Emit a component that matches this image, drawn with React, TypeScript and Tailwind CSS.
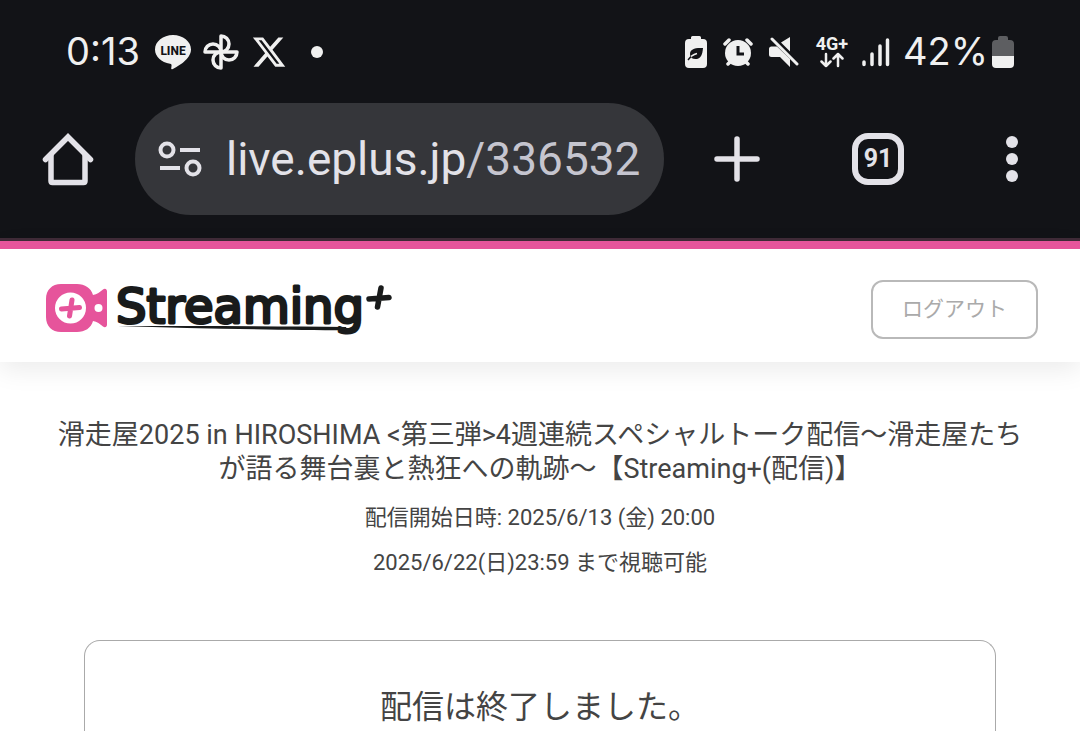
import React from 'react';
import { FaXTwitter } from 'react-icons/fa6';

function LineIcon() {
  return (
    <svg viewBox="0 0 36 36" className="w-9 h-9" fill="none">
      <path d="M18 1C8 1 0 7.500 0 15.500c0 7.200 6.400 13 15 14.300 1.500.3 1.700 1 1.500 2.300l-.3 2.400c0 .7.400 1 1.100.7C23 32.500 36 25 36 15.500 36 7.500 28 1 18 1Z" fill="#f0f0f0" />
      <text x="18" y="21" textAnchor="middle" fontSize="12" fontWeight="800" fontFamily="Roboto, sans-serif" fill="#121317">
        LINE
      </text>
    </svg>
  );
}

function PinwheelIcon() {
  return (
    <svg viewBox="0 0 36 36" className="w-9 h-9" fill="none" stroke="#f0f0f0" strokeWidth="3.500" strokeLinejoin="round">
      <path d="M18 18V2a8 8 0 0 1 0 16Z" />
      <path d="M18 18h16a8 8 0 0 1-16 0Z" />
      <path d="M18 18v16a8 8 0 0 1 0-16Z" />
      <path d="M18 18H2a8 8 0 0 1 16 0Z" />
    </svg>
  );
}

function PowerSavingIcon() {
  return (
    <svg viewBox="0 0 22 32" className="w-[22px] h-8">
      <path d="M6 3V1.500Q6 0 7.500 0h7Q16 0 16 1.500V3h2q4 0 4 4v21q0 4-4 4H4q-4 0-4-4V7q0-4 4-4Z" fill="#f0f0f0" />
      <path d="M18 12c-8-.5-13 1-13 6 0 1.500.5 3 1.500 4 1.500.9 3.500 1.200 5.500.9 4-.7 5.500-4.400 6-10.900Z" fill="#121317" />
      <path d="M3 24.500c2-3.500 5-6 9-7" stroke="#f0f0f0" strokeWidth="1.500" fill="none" />
      <path d="M3 24c1-1 2-2.500 3-3.500" stroke="#121317" strokeWidth="1.500" />
    </svg>
  );
}

function AlarmIcon() {
  return (
    <svg viewBox="0 0 30 30" className="w-[30px] h-[30px]" fill="none" strokeLinecap="round">
      <circle cx="15" cy="16" r="13" fill="#f0f0f0" />
      <path d="M2 7l4-4M28 7l-4-4M5 27l3-3M25 27l-3-3" stroke="#f0f0f0" strokeWidth="3.500" />
      <path d="M15 9v8h6" stroke="#121317" strokeWidth="3" strokeLinecap="butt" />
    </svg>
  );
}

function MuteIcon() {
  return (
    <svg viewBox="0 0 30 32" className="w-[30px] h-8" fill="none">
      <path d="M0 13q0-2.500 2.500-2.500H8L21 23v8L11 21H2.500Q0 21 0 18.500ZM12 6.500 21 1v14.500Z" fill="#f0f0f0" />
      <path d="M3 3l25 25" stroke="#f0f0f0" strokeWidth="3" strokeLinecap="round" />
    </svg>
  );
}

function NetworkIcon() {
  return (
    <div className="w-[34px] flex flex-col items-center">
      <span className="font-[Roboto,sans-serif] text-[18px] leading-4 font-bold">4G+</span>
      <svg viewBox="0 0 24 16" className="w-6 h-4" fill="none" stroke="#f0f0f0" strokeWidth="2.500" strokeLinecap="round" strokeLinejoin="round">
        <path d="M6 2v12M1.500 9.500 6 14l4.500-4.500M18 14V2M13.500 6.500 18 2l4.500 4.500" />
      </svg>
    </div>
  );
}

function SignalIcon() {
  return (
    <svg viewBox="0 0 28 30" className="w-7 h-[30px]" stroke="#f0f0f0" strokeWidth="3.500" strokeLinecap="round">
      <path d="M2 25v2.500M10 17v10.500M18 9v18.500M25.500 3v24.500" />
    </svg>
  );
}

function BatteryIcon() {
  return (
    <svg viewBox="0 0 22 32" className="w-[22px] h-8">
      <path d="M6 4V2q0-2 2-2h6q2 0 2 2v2h2q4 0 4 4v12H0V8q0-4 4-4Z" fill="#5d5e61" />
      <path d="M0 20h22v8q0 4-4 4H4q-4 0-4-4Z" fill="#f0f0f0" />
    </svg>
  );
}

function HomeIcon() {
  return (
    <svg viewBox="0 0 52 54" className="w-[52px] h-[54px]" fill="none" stroke="#e3e2e8" strokeWidth="5.500">
      <path d="M3.500 27.500 26 5l22.500 22.500" strokeLinecap="round" />
      <path d="M9 23v26q0 1.500 1.500 1.500h31q1.500 0 1.500-1.500V23" strokeLinejoin="round" />
    </svg>
  );
}

function TuneIcon() {
  return (
    <svg viewBox="0 0 44 36" className="w-11 h-9" fill="none" stroke="#e3e2e8" strokeWidth="4">
      <circle cx="9" cy="9" r="6.500" />
      <circle cx="35" cy="27" r="6.500" />
      <path d="M22 9h20M2 27h20" />
    </svg>
  );
}

function StreamingLogo() {
  return (
    <svg viewBox="0 -4 350 68" className="w-[350px] h-[68px]" fill="none" strokeLinecap="round" aria-label="Streaming+">
      <path d="M16 4h16c8 0 14 4 16 11 4-.5 7-3 10-5.500 2-1.500 4-.5 4 2v33c0 2.500-2 3.500-4 2-3-2.500-6-5-10-5.500-2 7-8 11-16 11H16C7 52 1 46 1 37V19C1 10 7 4 16 4Z" fill="#e6549b" />
      <circle cx="25.500" cy="28" r="15.500" fill="#fff" />
      <path d="M16.500 29l18-1.500M27 20l-2.500 16" stroke="#e6549b" strokeWidth="5" />
      <circle cx="53.500" cy="28" r="4" fill="#fff" />
      <text x="71" y="43" fontSize="48" fontFamily="DejaVu Sans, sans-serif" fill="#191b1b" stroke="#191b1b" strokeWidth="3" strokeLinejoin="round">
        Streaming
      </text>
      <path d="M73 46c80 0 160 0 228 1l1 3.500C235 50 150 48.500 73 46Z" fill="#191b1b" />
      <path d="M324 19l20-1.500M336 8l-3.500 19" stroke="#191b1b" strokeWidth="5.500" />
    </svg>
  );
}

function StatusBar() {
  return (
    <div className="h-[103px] pl-[66px] pr-[66px] flex items-center justify-between text-[#f0f0f0] font-[Inter,sans-serif] text-[38px]">
      <div className="flex items-center gap-3">
        <span className="w-[77px]">0:13</span>
        <LineIcon />
        <PinwheelIcon />
        <FaXTwitter size={36} />
        <span className="w-3 h-3 ml-3 rounded-full bg-[#f0f0f0]"></span>
      </div>
      <div className="flex items-center gap-4">
        <PowerSavingIcon />
        <AlarmIcon />
        <MuteIcon />
        <div className="flex items-center gap-[13px]">
          <NetworkIcon />
          <SignalIcon />
          <div className="flex items-center gap-1">
            <span>42%</span>
            <BatteryIcon />
          </div>
        </div>
      </div>
    </div>
  );
}

function BrowserBar() {
  return (
    <div className="pl-[42px] pr-[62px] pb-[23px] flex items-center">
      <button type="button" aria-label="Home">
        <HomeIcon />
      </button>
      <button
        type="button"
        className="flex-1 h-28 ml-[41px] mr-[50px] pl-[23px] flex items-center gap-6 rounded-full bg-[#35363a] font-[Roboto,sans-serif] text-[46px] text-[#e3e2e8]"
      >
        <TuneIcon />
        <span>
          live.eplus.jp<span className="text-[#c5c5cf]">/336532</span>
        </span>
      </button>
      <button type="button" aria-label="New tab">
        <svg viewBox="0 0 46 46" className="w-[46px] h-[46px]" stroke="#e3e2e8" strokeWidth="5.500" strokeLinecap="round">
          <path d="M23 3v40M3 23h40" />
        </svg>
      </button>
      <button
        type="button"
        className="w-[52px] h-[52px] ml-[92px] mr-[102px] flex items-center justify-center rounded-2xl border-6 border-[#e3e2e8] font-[Roboto,sans-serif] text-[25px] font-bold text-[#e3e2e8]"
      >
        91
      </button>
      <button type="button" aria-label="Menu" className="flex flex-col gap-[5px]">
        <span className="w-3 h-3 rounded-full bg-[#e3e2e8]"></span>
        <span className="w-3 h-3 rounded-full bg-[#e3e2e8]"></span>
        <span className="w-3 h-3 rounded-full bg-[#e3e2e8]"></span>
      </button>
    </div>
  );
}

function App() {
  return (
    <div lang="ja" className="min-h-screen flex flex-col bg-white font-[Roboto,'Noto_Sans_CJK_JP',sans-serif] text-[#444]">
      <div className="bg-[#121317] border-b-3 border-[#402b38]">
        <StatusBar />
        <BrowserBar />
      </div>

      <header className="h-[121px] shrink-0 pt-2 pl-[45px] pr-[42px] flex items-center justify-between border-t-8 border-[#e6549b] bg-white shadow-[0_8px_24px_rgba(0,0,0,0.08)]">
        <a href="#">
          <StreamingLogo />
        </a>
        <button type="button" className="w-[167px] h-[59px] rounded-xl border-2 border-[#b9b9b9] text-[21px] text-[#aaa]">
          ログアウト
        </button>
      </header>

      <main className="flex-1 flex flex-col pt-14 px-12 text-center">
        <h1 className="text-[27px] leading-[34px]">
          滑走屋2025 in HIROSHIMA &lt;第三弾&gt;4週連続スペシャルトーク配信〜滑走屋たちが語る舞台裏と熱狂への軌跡〜【Streaming+(配信)】
        </h1>
        <p className="mt-4 text-[22px] leading-8">配信開始日時: 2025/6/13 (金) 20:00</p>
        <p className="mt-[13px] text-[22px] leading-8">2025/6/22(日)23:59 まで視聴可能</p>
        <section className="flex-1 mt-[61px] mx-9 pt-[42px] rounded-t-2xl border border-b-0 border-[#aaa]">
          <p className="text-[32px] leading-12">配信は終了しました。</p>
        </section>
      </main>
    </div>
  );
}

export default App;
